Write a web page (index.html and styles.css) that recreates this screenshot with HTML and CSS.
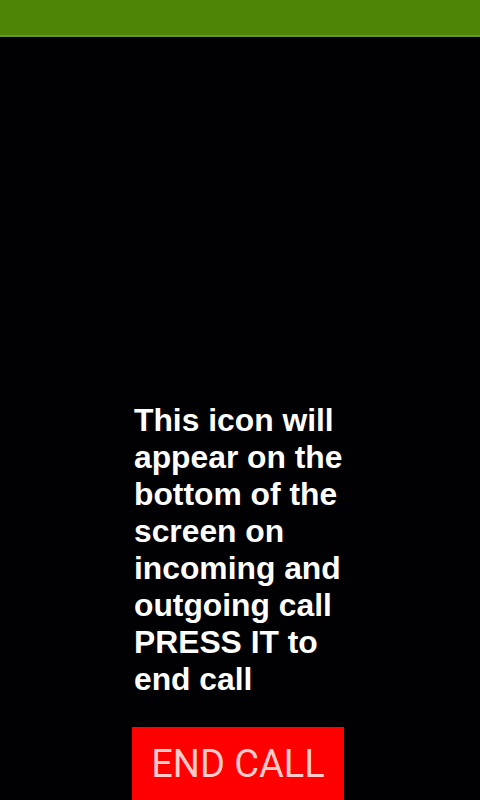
FILE: index.html
```html
<!DOCTYPE html>
<html>
<head>
<meta charset="utf-8">
<link rel="stylesheet" href="styles.css">
</head>
<body>
<div class="screen">
  <header class="topbar"></header>
  <main class="content">
    <p class="message">This icon will appear on the bottom of the screen on incoming and outgoing call PRESS IT to end call</p>
    <div class="end-call">END CALL</div>
  </main>
</div>
</body>
</html>
```
FILE: styles.css
```css
html, body {
  margin: 0;
  padding: 0;
  background: #000;
}
.screen {
  width: 480px;
  height: 800px;
  overflow: hidden;
  display: flex;
  flex-direction: column;
  background: #010104;
}
.topbar {
  height: 35px;
  background: #4f8507;
  border-bottom: 2px solid #67963a;
  flex: none;
}
.content {
  flex: 1;
  display: flex;
  flex-direction: column;
  padding-left: 132px;
  padding-top: 365px;
}
.message {
  margin: 0;
  width: 215px;
  padding-left: 2px;
  font-family: "Liberation Sans", Arial, sans-serif;
  font-weight: bold;
  font-size: 31.8px;
  line-height: 37px;
  color: #fff;
}
.end-call {
  margin-top: 29px;
  width: 212px;
  height: 73px;
  background: #ff0000;
  color: #ffcaca;
  font-family: Roboto, "Liberation Sans", sans-serif;
  font-size: 38px;
  display: flex;
  align-items: center;
  justify-content: center;
}
```
